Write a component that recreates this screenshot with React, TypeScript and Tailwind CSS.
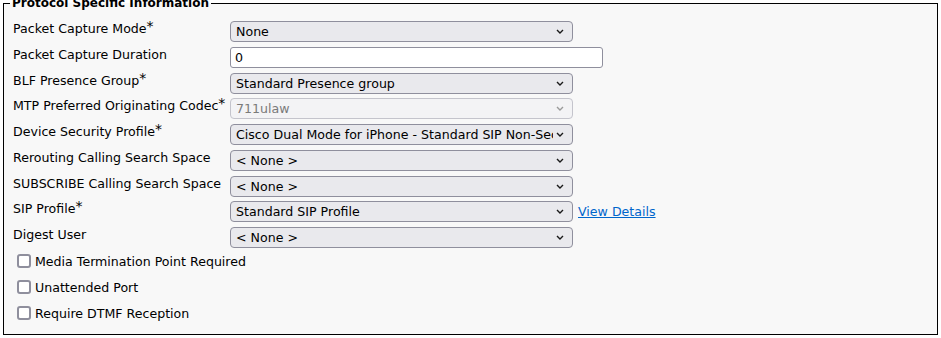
const rows = [
  { label: "Packet Capture Mode", req: true, kind: "select", value: "None" },
  { label: "Packet Capture Duration", req: false, kind: "input", value: "0" },
  { label: "BLF Presence Group", req: true, kind: "select", value: "Standard Presence group" },
  { label: "MTP Preferred Originating Codec", req: true, kind: "disabled", value: "711ulaw" },
  { label: "Device Security Profile", req: true, kind: "select", value: "Cisco Dual Mode for iPhone - Standard SIP Non-Secure Profile" },
  { label: "Rerouting Calling Search Space", req: false, kind: "select", value: "< None >" },
  { label: "SUBSCRIBE Calling Search Space", req: false, kind: "select", value: "< None >" },
  { label: "SIP Profile", req: true, kind: "select", value: "Standard SIP Profile", link: "View Details" },
  { label: "Digest User", req: false, kind: "select", value: "< None >" },
];

const checks = ["Media Termination Point Required", "Unattended Port", "Require DTMF Reception"];

function Chevron({ disabled }: { disabled?: boolean }) {
  return (
    <svg width="8" height="5" viewBox="0 0 8 5" className="shrink-0">
      <path
        d="M1 1 L4 4 L7 1"
        fill="none"
        stroke={disabled ? "#9a9a9a" : "#1a1a1a"}
        strokeWidth="1.4"
      />
    </svg>
  );
}

function Select({ value, disabled }: { value: string; disabled?: boolean }) {
  return (
    <div
      className={
        disabled
          ? "flex h-[21px] w-[343px] items-center rounded-[4px] border border-[#c4c4cc] bg-[#f3f3f5] pl-[5px] pr-[8px] text-[#7a7a7a]"
          : "flex h-[21px] w-[343px] items-center rounded-[4px] border border-[#8f8f9d] bg-[#e9e9ed] pl-[5px] pr-[8px]"
      }
    >
      <span className="mr-[3px] flex-1 overflow-hidden whitespace-nowrap">{value}</span>
      <Chevron disabled={disabled} />
    </div>
  );
}

export default function App() {
  return (
    <div className="min-h-screen bg-white font-['DejaVu_Sans',sans-serif] text-[12.6px] leading-[15px] text-black">
      <fieldset className="mx-[3px] mt-[-4px] border border-black bg-[#f8f8f8] pb-[8px] pl-[9px]">
        <legend className="ml-[-3px] px-[2px] text-[12px] font-bold">Protocol Specific Information</legend>

        <div className="flex flex-col gap-[4.75px] pt-[10px]">
          {rows.map((r) => (
            <div key={r.label} className="flex h-[21px] items-start">
              <div className="w-[217px]">
                {r.label}
                {r.req && (
                  <span className="relative -top-[2px] text-[14px] leading-none">*</span>
                )}
              </div>
              {r.kind === "input" ? (
                <div className="flex h-[21px] w-[373px] items-center rounded-[3px] border border-[#8f8f9d] bg-white pl-[4px]">
                  {r.value}
                </div>
              ) : (
                <Select value={r.value} disabled={r.kind === "disabled"} />
              )}
              {r.link && (
                <a href="#" className="ml-[5px] self-center text-[#0066cc] underline">
                  {r.link}
                </a>
              )}
            </div>
          ))}
        </div>

        <div className="flex flex-col">
          {checks.map((c) => (
            <label key={c} className="flex h-[26px] items-center">
              <span className="ml-[4px] h-[14px] w-[14px] rounded-[3px] border-2 border-[#8f8f9d] bg-white" />
              <span className="ml-[4px]">{c}</span>
            </label>
          ))}
        </div>
      </fieldset>
    </div>
  );
}
